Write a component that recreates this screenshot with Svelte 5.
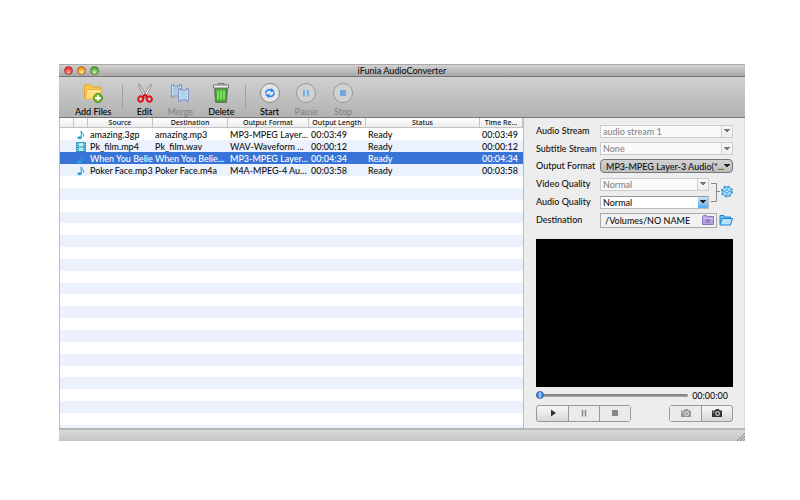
<script lang="ts">
	interface Row {
		icon: 'note' | 'film';
		source: string;
		destination: string;
		format: string;
		length: string;
		status: string;
		remaining: string;
	}

	const rows: Row[] = [
		{ icon: 'note', source: 'amazing.3gp', destination: 'amazing.mp3', format: 'MP3-MPEG Layer...', length: '00:03:49', status: 'Ready', remaining: '00:03:49' },
		{ icon: 'film', source: 'Pk_film.mp4', destination: 'Pk_film.wav', format: 'WAV-Waveform ...', length: '00:00:12', status: 'Ready', remaining: '00:00:12' },
		{ icon: 'note', source: 'When You Believ', destination: 'When You Belie...', format: 'MP3-MPEG Layer...', length: '00:04:34', status: 'Ready', remaining: '00:04:34' },
		{ icon: 'note', source: 'Poker Face.mp3', destination: 'Poker Face.m4a', format: 'M4A-MPEG-4 Au...', length: '00:03:58', status: 'Ready', remaining: '00:03:58' }
	];

	const fillers = Array.from({ length: 21 });

	let selected = $state(2);
	let position = $state(0);
	let folder = $state('/Volumes/NO NAME');
</script>

{#snippet camera()}
	<path d="M1 2.5h3l1-1.5h3l.6 1.5H11V9H1z" fill="currentColor" />
	<circle cx="6.6" cy="5.6" r="2.4" fill="#ddd" />
	<circle cx="6.6" cy="5.6" r="1.3" fill="currentColor" />
	<path d="M1.8 3.6h1.4v1H1.8z" fill="#ddd" />
{/snippet}

<div class="window">
	<header class="titlebar">
		<div class="lights">
			<button class="light light--red" aria-label="Close"></button>
			<button class="light light--amber" aria-label="Minimize"></button>
			<button class="light light--green" aria-label="Zoom"></button>
		</div>
		<h1>iFunia AudioConverter</h1>
	</header>

	<nav class="toolbar">
		<div class="tools">
			<button class="tool">
				<svg width="22" height="22" viewBox="0 0 22 22">
					<path d="M2.5 17V3.5q0-1 1-1h5l2 2.5h8v4" fill="#f9c74f" stroke="#e3a52c" />
					<path d="M3 17 5 7.500h14.500L17.500 17z" fill="#ffdf7c" stroke="#eeb33c" />
					<path d="M5.500 9h12" stroke="#fff3bc" />
					<circle cx="16" cy="16" r="4.500" fill="#72b934" stroke="#4c8c1b" />
					<path d="M16 13.200v5.600M13.200 16h5.600" stroke="#fff" stroke-width="1.800" />
				</svg>
				Add Files
			</button>
		</div>
		<span class="separator"></span>
		<div class="tools">
			<button class="tool">
				<svg width="16" height="22" viewBox="0 0 16 22">
					<path d="M2.200 2 9.800 14.500 8 16 2 5z" fill="#eee" stroke="#777" stroke-width=".8" />
					<path d="M13.800 2 6.200 14.500 8 16 14 5z" fill="#fff" stroke="#777" stroke-width=".8" />
					<path d="M8 12.500 5.500 15.200M8 12.500l2.500 2.700" stroke="#d60d12" stroke-width="2" />
					<ellipse cx="3.700" cy="17" rx="2.500" ry="2.700" transform="rotate(30 3.700 17)" fill="none" stroke="#df1015" stroke-width="1.900" />
					<ellipse cx="12.300" cy="17" rx="2.500" ry="2.700" transform="rotate(-30 12.300 17)" fill="none" stroke="#df1015" stroke-width="1.900" />
				</svg>
				Edit
			</button>
			<button class="tool" disabled>
				<svg width="20" height="22" viewBox="0 0 20 22">
					<path d="M1.500 2.500h2v1.500h6V2.500h2v13h-2V14h-6v1.500h-2z" fill="#a9c9e4" stroke="#829ac8" />
					<path d="M2.500 5v8M10.500 5v8" stroke="#edf5fb" stroke-dasharray="1 1" />
					<path d="M8.500 6.500h2V8h6V6.500h2v13h-2V18h-6v1.500h-2z" fill="#add5e5" stroke="#8a8fc7" />
					<path d="M9.500 9v8M17.500 9v8" stroke="#f3f8fc" stroke-dasharray="1 1" />
				</svg>
				Merge
			</button>
			<button class="tool">
				<svg width="20" height="22" viewBox="0 0 20 22">
					<path d="M7 3V1.500h6V3" fill="none" stroke="#777" />
					<path d="M2.500 3h15v3h-15z" fill="#eee" stroke="#777" />
					<path d="M3.500 6.500h13l-1 14h-11z" fill="#2f9b20" stroke="#6f7a6d" />
					<path d="M5 7h10l-.5 12h-9z" fill="#43b52c" />
					<path d="M7 8.500v9M10 8.500v9M13 8.500v9" stroke="#b5ee96" stroke-width="1.200" />
				</svg>
				Delete
			</button>
		</div>
		<span class="separator"></span>
		<div class="tools">
			<button class="tool">
				<svg width="20" height="22" viewBox="0 0 20 22">
					<circle cx="10" cy="11" r="9.500" fill="#e4e5e7" stroke="#888" />
					<path d="M5.700 11.500C5.800 8.300 9 6.700 12 8.400M14.300 10.500c-.1 3.200-3.300 4.800-6.300 3.100" fill="none" stroke="#3186e8" stroke-width="1.700" />
					<path d="M11.200 6 15 9.200l-4.500 1zM8.800 16 5 12.800l4.500-1z" fill="#3186e8" />
				</svg>
				Start
			</button>
			<button class="tool" disabled>
				<svg width="20" height="22" viewBox="0 0 20 22">
					<circle cx="10" cy="11" r="9.500" fill="#d0d1d3" stroke="#999" />
					<path d="M8 8v6.500M12 8v6.500" stroke="#78aee6" stroke-width="2" />
				</svg>
				Pause
			</button>
			<button class="tool" disabled>
				<svg width="20" height="22" viewBox="0 0 20 22">
					<circle cx="10" cy="11" r="9.500" fill="#d0d1d3" stroke="#999" />
					<path d="M7 8h6v6H7z" fill="#72a8de" />
				</svg>
				Stop
			</button>
		</div>
	</nav>

	<main class="content">
		<section class="files">
			<table>
				<colgroup>
					<col class="col-mark" />
					<col class="col-mark" />
					<col class="col-source" />
					<col class="col-destination" />
					<col class="col-format" />
					<col class="col-length" />
					<col />
					<col class="col-remaining" />
				</colgroup>
				<thead>
					<tr>
						<th></th>
						<th></th>
						<th>Source</th>
						<th>Destination</th>
						<th>Output Format</th>
						<th>Output Length</th>
						<th>Status</th>
						<th>Time Re...</th>
					</tr>
				</thead>
				<tbody>
					{#each rows as row, i}
						<tr class:selected={selected === i} onclick={() => (selected = i)}>
							<td></td>
							<td>
								<svg width="10" height="10" viewBox="0 0 10 10">
									{#if row.icon === 'note'}
										<ellipse cx="3.500" cy="7.800" rx="2.200" ry="1.500" fill="#22a7d8" />
										<path d="M5.200 8V1q.3 2 2 3 1 1 .2 2.500" fill="none" stroke="#2298cb" />
									{:else}
										<path d="M0 0h10v10H0z" fill="#218fb4" />
										<path d="M2.500 1h5v3.500h-5zM2.500 5.500h5V9h-5z" fill="#bcecf5" />
										<path d="M1.200 0v10M8.800 0v10" stroke="#d8f5fa" stroke-dasharray="1 1" />
									{/if}
								</svg>
							</td>
							<td>{row.source}</td>
							<td>{row.destination}</td>
							<td>{row.format}</td>
							<td>{row.length}</td>
							<td>{row.status}</td>
							<td>{row.remaining}</td>
						</tr>
					{/each}
				</tbody>
			</table>
			<div class="stripes">
				{#each fillers as _}
					<div class="stripe"></div>
				{/each}
				<div class="stripe stripe--cut"></div>
			</div>
		</section>

		<aside class="panel">
			<div class="settings">
				<label for="audio-stream">Audio Stream</label>
				<select id="audio-stream" class="combo wide" disabled>
					<option>audio stream 1</option>
				</select>

				<label for="subtitle-stream">Subtitle Stream</label>
				<select id="subtitle-stream" class="combo wide" disabled>
					<option>None</option>
				</select>

				<label for="output-format">Output Format</label>
				<select id="output-format" class="popup wide">
					<option>MP3-MPEG Layer-3 Audio(*...</option>
				</select>

				<label for="video-quality">Video Quality</label>
				<select id="video-quality" class="combo" disabled>
					<option>Normal</option>
				</select>
				<button class="advanced" aria-label="Advanced settings">
					<svg width="24" height="26" viewBox="0 0 24 26">
						<path d="M2 3.500h5.500v18H2M7.500 11.500H11" fill="none" stroke="#888" />
						<circle cx="18" cy="11.500" r="4.600" fill="#a6dcfa" stroke="#3f9bdb" />
						<circle cx="18" cy="11.500" r="5.300" fill="none" stroke="#2187cf" stroke-width="1.200" stroke-dasharray="2.100 2.060" />
						<circle cx="18" cy="11.500" r="1.400" fill="#eef8ff" stroke="#2187cf" stroke-width=".8" />
						<path d="M18 7v2.500M18 13.500V16M13.500 11.500H16M20 11.500h2.500" stroke="#54aee5" />
					</svg>
				</button>

				<label for="audio-quality">Audio Quality</label>
				<select id="audio-quality" class="combo">
					<option>Normal</option>
				</select>

				<label for="destination">Destination</label>
				<div class="destination wide">
					<div class="path">
						<input id="destination" type="text" bind:value={folder} />
						<button aria-label="Choose folder">
							<svg width="12" height="10" viewBox="0 0 12 10">
								<path d="M.5 9.500v-8L1.500.5h3l1 1h6v8z" fill="#b3a2df" stroke="#8a78bd" />
								<path d="M1 3.500h10" stroke="#d5caef" />
								<circle cx="6" cy="6" r="1.700" fill="#9b89cd" stroke="#7d6bb4" stroke-width=".7" />
							</svg>
						</button>
					</div>
					<button aria-label="Open folder">
						<svg width="14" height="12" viewBox="0 0 14 12">
							<path d="M1 10.500v-9h4l1 1.500h5.500v2" fill="#6fbdf0" stroke="#1c83cf" />
							<path d="M1 11 3.200 4.500h10.300L11.500 11z" fill="#b4e1fb" stroke="#1c83cf" />
						</svg>
					</button>
				</div>
			</div>

			<div class="video"></div>

			<div class="seek">
				<input type="range" min="0" max="100" bind:value={position} aria-label="Position" />
				<time>00:00:00</time>
			</div>

			<div class="controls">
				<div class="segment">
					<button aria-label="Play">
						<svg width="12" height="10" viewBox="0 0 12 10"><path d="M4 1.500v7l5-3.500z" fill="#333" /></svg>
					</button>
					<button aria-label="Pause" disabled>
						<svg width="12" height="10" viewBox="0 0 12 10"><path d="M4.500 2v6.500M7.500 2v6.500" stroke="#888" stroke-width="1.500" /></svg>
					</button>
					<button aria-label="Stop" disabled>
						<svg width="12" height="10" viewBox="0 0 12 10"><path d="M3 2h6v6H3z" fill="#888" /></svg>
					</button>
				</div>
				<div class="segment">
					<button aria-label="Snapshot folder" disabled>
						<svg class="faded" width="12" height="10" viewBox="0 0 12 10">{@render camera()}</svg>
					</button>
					<button aria-label="Take snapshot">
						<svg width="12" height="10" viewBox="0 0 12 10">{@render camera()}</svg>
					</button>
				</div>
			</div>
		</aside>
	</main>

	<footer class="statusbar">
		<svg width="8" height="8" viewBox="0 0 8 8"><path d="M0 8 8 0M3 8l5-5M6 8l2-2" stroke="#888" /></svg>
	</footer>
</div>

<style>
	:global(body) {
		background: #fff;
	}

	.window {
		margin: 64px 55px 59px 59px;
		font: 500 9px/12px Lato, 'Noto Sans', sans-serif;
		color: #111;
		background: #ededed;
	}

	button,
	select,
	input {
		font: inherit;
		color: inherit;
		margin: 0;
		padding: 0;
		border: 0;
		background: none;
		box-sizing: border-box;
		border-radius: 0;
	}

	svg {
		display: block;
		flex: none;
	}

	.titlebar {
		display: grid;
		grid-template-columns: 1fr auto 1fr;
		align-items: center;
		height: 13px;
		background: linear-gradient(#d2d2d2, #a9a9a9);
		border-top: 1px solid #aaa;
		border-bottom: 1px solid #777;
		box-sizing: border-box;
	}

	.lights {
		display: flex;
		gap: 4px;
		padding-left: 5px;
	}

	.light {
		width: 9px;
		height: 9px;
		border-radius: 50%;
		border: 1px solid #777;
	}

	.light--red {
		background: radial-gradient(circle at 50% 80%, #ffb1a0, #ec3c3c 60%);
		border-color: #a33;
	}

	.light--amber {
		background: radial-gradient(circle at 50% 80%, #fff08a, #f09a2a 65%);
		border-color: #a7672a;
	}

	.light--green {
		background: radial-gradient(circle at 50% 80%, #d5f7a5, #4fae3e 65%);
		border-color: #44803a;
	}

	h1 {
		margin: 0;
		font-size: 9px;
		line-height: 11px;
		font-weight: 500;
	}

	.toolbar {
		display: flex;
		align-items: flex-end;
		height: 41px;
		padding-left: 8px;
		background: linear-gradient(#d0d0d0, #b2b2b2);
		border-bottom: 1px solid #777;
		box-sizing: border-box;
	}

	.tools {
		display: flex;
		gap: 15px;
		padding: 0 8px;
	}

	.tool {
		display: flex;
		flex-direction: column;
		align-items: center;
		gap: 2px;
		line-height: 11px;
		color: #000;
	}

	.tool:disabled {
		color: #858585;
	}

	.separator {
		width: 1px;
		height: 24px;
		margin: 0 6px 8px 2px;
		background: #a2a2a2;
	}

	.content {
		display: flex;
	}

	.files {
		display: flex;
		flex: 1;
		flex-direction: column;
		min-width: 0;
		background: #fff;
		border-left: 1px solid #bbb;
		border-right: 1px solid #bbb;
	}

	table {
		width: 100%;
		table-layout: fixed;
		border-collapse: separate;
		border-spacing: 0;
	}

	.col-mark {
		width: 14px;
	}

	.col-source {
		width: 65px;
	}

	.col-destination {
		width: 75px;
	}

	.col-format {
		width: 81px;
	}

	.col-length {
		width: 57px;
	}

	.col-remaining {
		width: 43px;
	}

	th {
		height: 10px;
		padding: 0;
		font: 500 7px/9px 'Noto Sans', sans-serif;
		white-space: nowrap;
		background: linear-gradient(#fff, #ececec);
		border-right: 1px solid #c4c4c4;
		border-bottom: 1px solid #c4c4c4;
		box-sizing: border-box;
	}

	td {
		height: 12px;
		padding: 1px 0 0 2px;
		line-height: 11px;
		box-sizing: border-box;
		overflow: hidden;
		white-space: nowrap;
	}

	tbody tr:nth-child(even),
	.stripe:nth-child(even) {
		background: #ebf2fe;
	}

	tbody tr.selected {
		color: #fff;
		background: #3874d8;
	}

	.stripes {
		display: flex;
		flex: 1;
		flex-direction: column;
	}

	.stripe {
		flex: 4;
	}

	.stripe--cut {
		flex: 1;
	}

	.panel {
		display: flex;
		flex-direction: column;
		width: 221px;
		padding: 4px 11px 6px 12px;
		box-sizing: border-box;
		border-right: 1px solid #ddd;
	}

	.settings {
		display: grid;
		grid-template-columns: 64px 1fr 24px;
		grid-template-rows: 18px 17px 18px 18px 18px 18px;
		align-items: center;
	}

	label {
		white-space: nowrap;
	}

	.wide {
		grid-column: 2 / 4;
	}

	select {
		width: 100%;
		height: 13px;
		padding: 0 12px 0 2px;
		appearance: none;
		line-height: 11px;
		border: 1px solid #bbb;
		border-top-color: #999;
		opacity: 1;
	}

	.combo {
		background:
			conic-gradient(from -40deg at 50% 100%, #222 80deg, transparent 0) right 2px center / 6px 4px no-repeat,
			linear-gradient(#c5e4fc, #5aa9ef) right / 10px 100% no-repeat,
			#fff;
	}

	.combo:disabled {
		color: #858585;
		border-color: #ccc;
		background:
			conic-gradient(from -40deg at 50% 100%, #777 80deg, transparent 0) right 2px center / 6px 4px no-repeat,
			linear-gradient(#ccc, #ccc) right 10px top / 1px 100% no-repeat,
			linear-gradient(#f8f8f8, #eee) right / 10px 100% no-repeat,
			#fafafa;
	}

	.popup {
		height: 14px;
		padding: 0 8px 0 5px;
		border: 1px solid #777;
		border-radius: 4px;
		background:
			conic-gradient(from -40deg at 50% 100%, #222 80deg, transparent 0) right 2px center / 6px 4px no-repeat,
			linear-gradient(#d2d2d2, #bdbdbd);
	}

	.advanced {
		grid-column: 3;
		grid-row: 4 / 6;
	}

	#audio-quality {
		grid-column: 2;
	}

	.destination {
		display: flex;
		align-items: center;
		gap: 2px;
		min-width: 0;
	}

	.path {
		display: flex;
		flex: 1;
		align-items: center;
		min-width: 0;
		height: 15px;
		padding-right: 2px;
		background: #f2f2f2;
		border: 1px solid #aaa;
		box-sizing: border-box;
	}

	.path input {
		flex: 1;
		min-width: 0;
		height: 13px;
		padding-left: 4px;
	}

	.video {
		margin-top: 10px;
		aspect-ratio: 4 / 3;
		background: #000;
	}

	.seek {
		display: flex;
		align-items: center;
		gap: 4px;
		margin-top: 3px;
	}

	.seek input {
		flex: 1;
		min-width: 0;
		height: 12px;
		appearance: none;
	}

	.seek input::-webkit-slider-runnable-track {
		height: 3px;
		border-radius: 2px;
		background: linear-gradient(#777, #aaa);
	}

	.seek input::-webkit-slider-thumb {
		width: 8px;
		height: 8px;
		margin-top: -3px;
		appearance: none;
		border: 1px solid #2b5cae;
		border-radius: 50%;
		background: linear-gradient(90deg, #4c93ea 30%, #d6edff 50%, #4c93ea 70%);
	}

	time {
		padding-right: 5px;
	}

	.controls {
		display: flex;
		justify-content: space-between;
		margin-top: 3px;
	}

	.segment {
		display: flex;
		border: 1px solid #999;
		border-radius: 3px;
		background: linear-gradient(#f7f7f7, #d8d8d8);
	}

	.segment button {
		display: flex;
		align-items: center;
		justify-content: center;
		width: 31px;
		height: 15px;
		color: #333;
	}

	.segment button + button {
		border-left: 1px solid #999;
	}

	.segment button:disabled {
		background: #ebebeb;
	}

	.segment .faded {
		color: #999;
	}

	.statusbar {
		display: flex;
		align-items: flex-end;
		justify-content: flex-end;
		height: 13px;
		background: linear-gradient(#d9d9d9, #c4c4c4);
		border-top: 2px solid #b4b8b8;
		box-sizing: border-box;
	}
</style>
